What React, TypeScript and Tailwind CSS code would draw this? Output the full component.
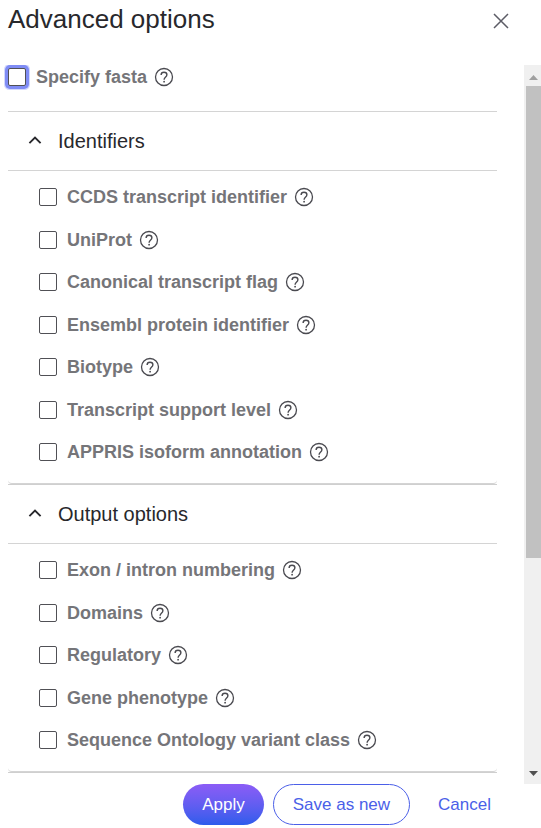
import { useState } from 'react'

const IDENTIFIERS = [
  'CCDS transcript identifier',
  'UniProt',
  'Canonical transcript flag',
  'Ensembl protein identifier',
  'Biotype',
  'Transcript support level',
  'APPRIS isoform annotation',
]

const OUTPUT_OPTIONS = [
  'Exon / intron numbering',
  'Domains',
  'Regulatory',
  'Gene phenotype',
  'Sequence Ontology variant class',
]

function HelpIcon() {
  return (
    <svg width="20" height="20" viewBox="0 0 20 20" fill="none" className="block">
      <circle cx="10" cy="10" r="8.5" stroke="#4a4a50" strokeWidth="1.3" />
      <path
        d="M7.100 7.900C7.100 6.200 8.300 5.200 10 5.200s2.900 1 2.900 2.600c0 1.100-.6 1.700-1.500 2.500-.9.800-1.300 1.200-1.300 2.400"
        stroke="#4a4a50"
        strokeWidth="1.4"
      />
      <circle cx="10.100" cy="14.700" r="0.9" fill="#4a4a50" />
    </svg>
  )
}

function Option({ label, focused }: { label: string; focused?: boolean }) {
  return (
    <div className="flex items-center">
      <label className="flex items-center gap-[10px] text-lg leading-6 font-bold text-[#757579]">
        <input
          type="checkbox"
          className={
            focused
              ? 'size-[18px] shrink-0 appearance-none rounded-xs border border-[#505055] bg-white shadow-[0_0_0_3px_#7f8cf5,0_0_0_4px_#d3d8fd] checked:bg-[#4b5fe8]'
              : 'size-[18px] shrink-0 appearance-none rounded-xs border border-[#505055] bg-white checked:bg-[#4b5fe8]'
          }
        />
        {label}
      </label>
      <button type="button" aria-label={`Help: ${label}`} className="ml-[7px] shrink-0">
        <HelpIcon />
      </button>
    </div>
  )
}

function Section({ title, options }: { title: string; options: string[] }) {
  const [open, setOpen] = useState(true)

  return (
    <section className="border-b border-[#cfcfcf]">
      <h2 className="border-b border-[#d4d4d4]">
        <button
          type="button"
          aria-expanded={open}
          onClick={() => setOpen(!open)}
          className="flex h-[58px] w-full items-center gap-4 pl-5 text-left text-xl text-[#28282c]"
        >
          <svg width="14" height="14" viewBox="0 0 14 14" fill="none" className={open ? '' : 'rotate-180'}>
            <path d="M1.4 9.2 7 3.6l5.6 5.6" stroke="#28282c" strokeWidth="1.9" />
          </svg>
          {title}
        </button>
      </h2>
      {open && (
        <ul className="rounded-b border-b border-[#d4d4d4] pt-[5px] pb-[10px] pl-[31px]">
          {options.map((label) => (
            <li key={label} className="flex h-[42px] items-center even:h-[43px]">
              <Option label={label} />
            </li>
          ))}
        </ul>
      )}
    </section>
  )
}

// Always-visible scroll track with arrow buttons at both ends
function ScrollTrack() {
  return (
    <div className="flex w-[17px] shrink-0 flex-col bg-[#f0f0f0] pl-[2px]">
      <button type="button" aria-label="Scroll up" className="flex h-[21px] shrink-0 items-center justify-center pt-[3px]">
        <svg width="9" height="5" viewBox="0 0 9 5">
          <path d="M0 5 4.5 0 9 5z" fill="#a0a0a0" />
        </svg>
      </button>
      <div className="flex flex-1 flex-col">
        <div className="flex-[693] bg-[#c1c1c1]" />
        <div className="flex-[307]" />
      </div>
      <button type="button" aria-label="Scroll down" className="flex h-[17px] shrink-0 items-center justify-center pb-[5px]">
        <svg width="9" height="5" viewBox="0 0 9 5">
          <path d="M0 0h9L4.5 5z" fill="#505050" />
        </svg>
      </button>
    </div>
  )
}

export default function App() {
  return (
    <div className="flex h-screen flex-col bg-white font-['Liberation_Sans',Arial,sans-serif]">
      <header className="flex h-[65px] shrink-0 items-start justify-between pr-[31px] pl-2">
        <h1 className="pt-1 text-[26px] leading-[30px] text-[#28282c]">Advanced options</h1>
        <button type="button" aria-label="Close" className="mt-3">
          <svg width="18" height="18" viewBox="0 0 18 18" fill="none">
            <path d="M2 2l14 14M16 2 2 16" stroke="#5c5c66" strokeWidth="1.5" />
          </svg>
        </button>
      </header>

      <div className="flex min-h-0 flex-1">
        <main className="min-w-0 flex-1 overflow-hidden pr-[27px] pl-2">
          <div className="border-b border-[#d4d4d4] pb-[22px]">
            <Option label="Specify fasta" focused />
          </div>
          <Section title="Identifiers" options={IDENTIFIERS} />
          <Section title="Output options" options={OUTPUT_OPTIONS} />
        </main>
        <ScrollTrack />
      </div>

      <footer className="flex shrink-0 items-center justify-end gap-[9px] pr-[31px] pb-[3px] text-[17px]">
        <button
          type="button"
          className="h-[41px] rounded-full bg-linear-to-b from-[#8b5cf6] to-[#2b5cec] px-[19px] text-white"
        >
          Apply
        </button>
        <button type="button" className="h-[41px] rounded-full border border-[#4b5fe8] px-[19px] text-[#4b5fe8]">
          Save as new
        </button>
        <button type="button" className="h-[41px] px-[19px] text-[#4b5fe8]">
          Cancel
        </button>
      </footer>
    </div>
  )
}
